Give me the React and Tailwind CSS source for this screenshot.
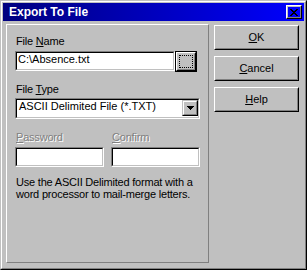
function Raised({ className = "", children }) {
  return (
    <div className={"border border-t-white border-l-white border-r-black border-b-black " + className}>
      <div className="w-full h-full border border-t-[#c0c0c0] border-l-[#c0c0c0] border-r-[#808080] border-b-[#808080] flex items-center justify-center">
        {children}
      </div>
    </div>
  );
}

function Sunken({ className = "", children }) {
  return (
    <div className={"border border-t-[#808080] border-l-[#808080] border-r-white border-b-white " + className}>
      <div className="w-full h-full border border-t-black border-l-black border-r-[#c0c0c0] border-b-[#c0c0c0] bg-white flex">
        {children}
      </div>
    </div>
  );
}

function CloseGlyph() {
  const rows = [
    [0, 1, 6, 7],
    [1, 2, 5, 6],
    [2, 3, 4, 5],
    [3, 4],
    [2, 3, 4, 5],
    [1, 2, 5, 6],
    [0, 1, 6, 7],
  ];
  return (
    <svg width="8" height="7" viewBox="0 0 8 7" shapeRendering="crispEdges">
      {rows.map((r, y) => r.map((x) => <rect key={y + "-" + x} x={x} y={y} width="1" height="1" fill="#000" />))}
    </svg>
  );
}

function DownArrow() {
  return (
    <svg width="7" height="4" viewBox="0 0 7 4" shapeRendering="crispEdges">
      <rect x="0" y="0" width="7" height="1" fill="#000" />
      <rect x="1" y="1" width="5" height="1" fill="#000" />
      <rect x="2" y="2" width="3" height="1" fill="#000" />
      <rect x="3" y="3" width="1" height="1" fill="#000" />
    </svg>
  );
}

function Btn({ u, rest }) {
  return (
    <Raised className="w-[85px] h-[25px]">
      <span className="leading-[13px]">
        <u>{u}</u>
        {rest}
      </span>
    </Raised>
  );
}

export default function App() {
  return (
    <div className="w-[307px] h-[270px] bg-[#c0c0c0] border border-t-[#c0c0c0] border-l-[#c0c0c0] border-r-black border-b-black font-['Liberation_Sans',Arial,sans-serif] text-[11px] leading-[13px] text-black">
      <div className="h-full border border-t-white border-l-white border-r-[#808080] border-b-[#808080] p-px flex flex-col">
        <div className="h-[18px] flex items-center justify-between bg-linear-to-r from-[#000080] to-[#0000ff] pl-[6px] pr-[2px]">
          <span className="text-white font-bold text-[12px] leading-[18px]">Export To File</span>
          <Raised className="w-[16px] h-[14px]">
            <CloseGlyph />
          </Raised>
        </div>

        <div className="flex pl-[3px] pt-[3px]">
          <div className="w-[203px] h-[239px] border border-t-white border-l-white border-r-[#808080] border-b-[#808080] pl-[8px] pt-[10px] flex flex-col items-start">
            <div className="pl-px tracking-[-0.2px]">
              File <u>N</u>ame
            </div>
            <div className="mt-[3px] flex items-start">
              <Sunken className="w-[160px] h-[20px]">
                <span className="pl-px whitespace-nowrap">C:\Absence.txt</span>
              </Sunken>
              <div className="w-[22px] h-[21px] border border-black">
                <Raised className="w-full h-full">
                  <div className="w-[14px] h-[13px] border border-dotted border-black" />
                </Raised>
              </div>
            </div>

            <div className="pl-px mt-[11px] tracking-[-0.2px]">
              File <u>T</u>ype
            </div>
            <Sunken className="mt-[2px] w-[185px] h-[21px]">
              <span className="pl-[2px] flex-1 whitespace-nowrap">ASCII Delimited File (*.TXT)</span>
              <div className="w-[16px] h-[16px] border border-t-[#c0c0c0] border-l-[#c0c0c0] border-r-black border-b-black bg-[#c0c0c0]">
                <div className="w-full h-full border border-t-white border-l-white border-r-[#808080] border-b-[#808080] flex items-center justify-center">
                  <DownArrow />
                </div>
              </div>
            </Sunken>

            <div className="mt-[12px] flex gap-[7px]">
              <div className="w-[89px] flex flex-col">
                <div className="pl-px tracking-[-0.2px] text-[#808080] [text-shadow:1px_1px_0_#fff]">
                  <u>P</u>assword
                </div>
                <Sunken className="mt-[3px] w-[89px] h-[20px]" />
              </div>
              <div className="w-[89px] flex flex-col">
                <div className="pl-px tracking-[-0.2px] text-[#808080] [text-shadow:1px_1px_0_#fff]">
                  <u>C</u>onfirm
                </div>
                <Sunken className="mt-[3px] w-[89px] h-[20px]" />
              </div>
            </div>

            <div className="pl-px mt-[9px] leading-[12px] tracking-[-0.2px] whitespace-nowrap">
              Use the ASCII Delimited format with a
              <br />
              word processor to mail-merge letters.
            </div>
          </div>

          <div className="ml-[5px] mt-px flex flex-col gap-[6px]">
            <Btn u="O" rest="K" />
            <Btn u="C" rest="ancel" />
            <Btn u="H" rest="elp" />
          </div>
        </div>
      </div>
    </div>
  );
}
